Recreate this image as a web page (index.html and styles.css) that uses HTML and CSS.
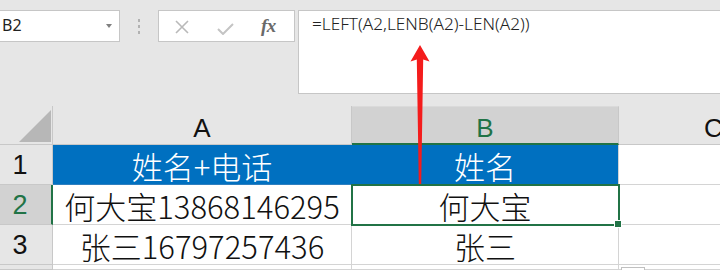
FILE: index.html
```html
<!DOCTYPE html>
<html lang="zh-CN">
<head>
<meta charset="utf-8">
<title>Excel LEFT LENB</title>
<link rel="stylesheet" href="styles.css">
</head>
<body>
<div class="toolbar">
  <div class="namebox">
    <span class="nb-text">B2</span>
    <span class="nb-caret"></span>
  </div>
  <div class="dots"><i></i><i></i><i></i></div>
  <div class="fxbox">
    <svg class="ic ic-x" width="16" height="14" viewBox="0 0 16 14"><path d="M2 1 L14 13 M14 1 L2 13" stroke="#b9b9b9" stroke-width="1.6" fill="none"/></svg>
    <svg class="ic ic-ok" width="17" height="12" viewBox="0 0 17 12"><path d="M1 6 L6 11 L16 1" stroke="#c4c4c4" stroke-width="2" fill="none"/></svg>
    <span class="fx">fx</span>
  </div>
  <div class="formula">=LEFT(A2,LENB(A2)-LEN(A2))</div>
</div>
<div class="sheet">
  <div class="corner"><span class="tri"></span></div>
  <div class="ch">A</div>
  <div class="ch ch-sel">B</div>
  <div class="ch ch-c">C</div>

  <div class="rh">1</div>
  <div class="cell head head-a">姓名+电话</div>
  <div class="cell head">姓名</div>
  <div class="cell"></div>

  <div class="rh rh-sel">2</div>
  <div class="cell">何大宝13868146295</div>
  <div class="cell sel">何大宝</div>
  <div class="cell"></div>

  <div class="rh">3</div>
  <div class="cell">张三16797257436</div>
  <div class="cell">张三</div>
  <div class="cell"></div>

  <div class="rh"></div>
  <div class="cell"></div>
  <div class="cell"></div>
  <div class="cell"></div>
</div>
<div class="paste-btn"></div>
<svg class="arrow" width="24" height="142" viewBox="408 44 24 142">
  <path d="M420 45 L429.5 61.5 L423.2 59.5 L421.2 184 L418.8 184 L416.8 59.5 L410.5 61.5 Z" fill="#f41c1c"/>
</svg>
</body>
</html>
```
FILE: styles.css
```css
* { box-sizing: border-box; }
html, body { margin: 0; padding: 0; }
body {
  width: 720px;
  height: 270px;
  overflow: hidden;
  background: #e6e6e6;
  position: relative;
  font-family: "Noto Sans", "Noto Sans CJK SC", sans-serif;
}
.toolbar {
  height: 106px;
  padding-top: 10px;
  display: flex;
  align-items: flex-start;
}
.namebox {
  margin-left: -1px;
  width: 121px;
  height: 32px;
  background: #fff;
  border: 1px solid #c6c6c6;
  display: flex;
  align-items: center;
  justify-content: space-between;
  padding: 0 7px 0 2px;
}
.nb-text {
  font-size: 16px;
  color: #222;
  line-height: 1.2;
}
.nb-caret {
  width: 0;
  height: 0;
  border-left: 3.5px solid transparent;
  border-right: 3.5px solid transparent;
  border-top: 4px solid #808080;
}
.dots {
  width: 38px;
  height: 32px;
  display: flex;
  flex-direction: column;
  align-items: center;
  justify-content: center;
  gap: 3px;
}
.dots i {
  display: block;
  width: 2px;
  height: 3px;
  background: #b2b2b2;
}
.fxbox {
  width: 137px;
  height: 32px;
  background: #fff;
  border: 1px solid #c6c6c6;
  display: flex;
  align-items: center;
  padding-left: 15px;
}
.ic-x { margin-top: 1px; }
.ic-ok { margin-left: 27px; margin-top: 5px; }
.fx {
  margin-left: 27px;
  font-family: "Liberation Serif", serif;
  font-style: italic;
  font-weight: bold;
  font-size: 19px;
  color: #6a6a6a;
  letter-spacing: -0.5px;
}
.formula {
  margin-left: 3px;
  flex: 1;
  height: 84px;
  background: #fff;
  border: 1px solid #c6c6c6;
  border-right: none;
  padding: 1px 0 0 13px;
  font-size: 17.2px;
  font-weight: 300;
  color: #222;
  letter-spacing: 0;
}
.sheet {
  display: grid;
  grid-template-columns: 53px 299px 267px 1fr;
  grid-template-rows: 39px 40px 40px 40px 1fr;
  height: 164px;
}
.corner {
  position: relative;
  border-right: 1px solid #c8c8c8;
  border-bottom: 1px solid #c8c8c8;
  background: #e6e6e6;
}
.tri {
  position: absolute;
  right: 1px;
  bottom: 2px;
  width: 0;
  height: 0;
  border-left: 32px solid transparent;
  border-bottom: 32px solid #b7b7b7;
}
.ch {
  background: #e6e6e6;
  border-right: 1px solid #c8c8c8;
  border-bottom: 1px solid #c8c8c8;
  display: flex;
  align-items: center;
  justify-content: center;
  padding-top: 6px;
  font-family: "Liberation Sans", "Noto Sans CJK SC", sans-serif;
  font-size: 26px;
  color: #111;
  line-height: 1.1;
}
.ch-sel {
  background: #d2d2d2;
  border-bottom: 2px solid #217346;
  color: #217346;
  border-top: 1px solid #dadada;
  padding-top: 6px;
}
.ch-c {
  justify-content: flex-start;
  padding-left: 85px;
}
.rh {
  background: #e6e6e6;
  border-right: 1px solid #c8c8c8;
  border-bottom: 1px solid #c8c8c8;
  display: flex;
  align-items: center;
  justify-content: center;
  padding-right: 12px;
  padding-top: 2px;
  font-family: "Liberation Sans", "Noto Sans CJK SC", sans-serif;
  font-size: 27px;
  color: #111;
  line-height: 1.1;
}
.rh-sel {
  background: #d2d2d2;
  border-right: 2px solid #217346;
  padding-right: 11px;
  color: #217346;
}
.cell {
  background: #fff;
  border-right: 1px solid #d4d4d4;
  border-bottom: 1px solid #d4d4d4;
  display: flex;
  align-items: center;
  justify-content: center;
  font-family: "Noto Sans CJK SC", sans-serif;
  font-weight: 300;
  font-size: 31px;
  line-height: 1.1;
  padding-top: 4px;
  color: #111;
  white-space: nowrap;
}
.head {
  background: #0070c0;
  color: #fff;
  border-bottom-color: #2f7fbf;
}
.head-a {
  border-right-color: #0070c0;
}
.sel {
  position: relative;
  outline: 2px solid #217346;
  outline-offset: -1px;
}
.sel::after {
  content: "";
  position: absolute;
  right: -4px;
  bottom: -4px;
  width: 6px;
  height: 6px;
  background: #217346;
  border: 1px solid #fff;
}
.paste-btn {
  position: absolute;
  left: 621px;
  top: 267px;
  width: 24px;
  height: 10px;
  background: #fff;
  border: 1px solid #c0c0c0;
}
.arrow {
  position: absolute;
  left: 408px;
  top: 44px;
}
```
